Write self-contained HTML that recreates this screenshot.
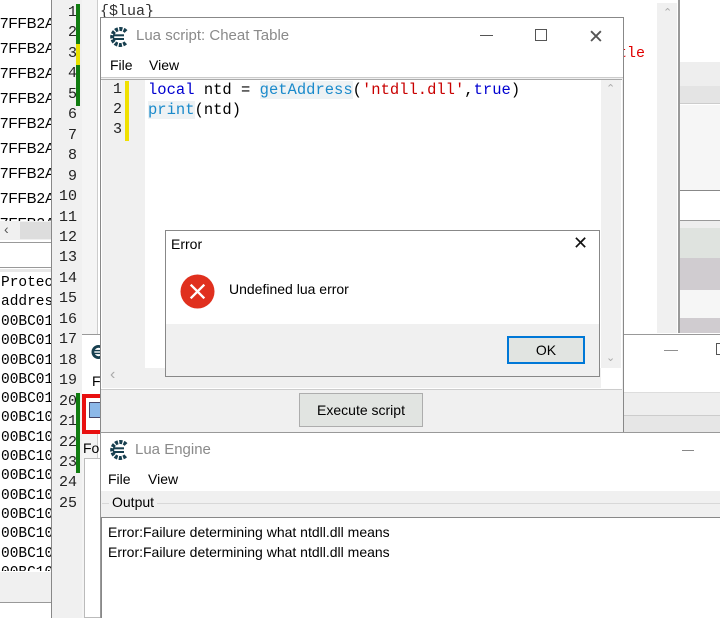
<!DOCTYPE html>
<html><head><meta charset="utf-8"><style>
*{margin:0;padding:0;box-sizing:border-box}
body{width:720px;height:618px;overflow:hidden;position:relative;background:#fff;font-family:"Liberation Sans","Noto Sans CJK SC",sans-serif;font-size:14px;color:#000}
.a{position:absolute}
.mono{font-family:"Liberation Mono",monospace;font-size:13.5px}
.ui{font-family:"Liberation Sans","Noto Sans CJK SC",sans-serif;font-size:14px}
</style></head><body>

<!-- left address list -->
<div class="a" style="left:0;top:0;width:52px;height:618px;background:#fff"></div>
<div class="a" style="left:0;top:11px;width:52px;line-height:25px;color:#000;overflow:hidden;height:210px;font-size:15px;white-space:nowrap">7FFB2A<br>7FFB2A<br>7FFB2A<br>7FFB2A<br>7FFB2A<br>7FFB2A<br>7FFB2A<br>7FFB2A<br>7FFB2A<br>7FFB2A</div>
<div class="a" style="left:0;top:221px;width:52px;height:19px;background:#f0f0f0"></div>
<div class="a" style="left:20px;top:222px;width:32px;height:17px;background:#ddd"></div>
<div class="a" style="left:4px;top:221px;color:#555;font-size:14px">&lsaquo;</div>
<div class="a" style="left:0;top:242px;width:52px;height:26px;background:#fff;border:1px solid #999;border-left:none"></div>
<div class="a" style="left:0;top:269px;width:52px;height:3px;background:#e8e8e8"></div>
<div class="a mono" style="left:1px;top:274px;line-height:19px;font-size:14.5px;white-space:nowrap;width:52px;overflow:hidden">Protec<br>address</div>
<div class="a mono" style="left:1px;top:313px;line-height:19.3px;height:258px;overflow:hidden;font-size:14.5px;width:51px;white-space:nowrap">00BC01<br>00BC01<br>00BC01<br>00BC01<br>00BC01<br>00BC10<br>00BC10<br>00BC10<br>00BC10<br>00BC10<br>00BC10<br>00BC10<br>00BC10<br>00BC10</div>
<div class="a" style="left:0;top:572px;width:52px;height:31px;background:#f0f0f0;border-bottom:1px solid #999"></div>

<!-- background editor gutter -->
<div class="a" style="left:51px;top:0;width:31px;height:618px;background:#f0f0f0;border-left:1px solid #888"></div>
<div class="a mono" style="left:53px;top:3px;line-height:20.45px;width:24px;text-align:right;color:#222;font-size:15px">1<br>2<br>3<br>4<br>5<br>6<br>7<br>8<br>9<br>10<br>11<br>12<br>13<br>14<br>15<br>16<br>17<br>18<br>19<br>20<br>21<br>22<br>23<br>24<br>25</div>
<div class="a" style="left:76px;top:4px;width:4px;height:40px;background:#107c10"></div>
<div class="a" style="left:76px;top:44px;width:4px;height:21px;background:#e8e000"></div>
<div class="a" style="left:76px;top:65px;width:4px;height:41px;background:#107c10"></div>
<div class="a" style="left:76px;top:393px;width:4px;height:80px;background:#107c10"></div>
<div class="a" style="left:82px;top:0;width:16px;height:618px;background:#f4f4f4;border-right:1px solid #ccc"></div>
<div class="a mono" style="left:100px;top:3px;color:#333;font-size:15px">{$lua}</div>
<div class="a mono" style="left:618px;top:45px;color:#e00000;font-size:15px">tle</div>
<div class="a" style="left:657px;top:3px;width:20px;height:330px;background:#f0f0f0"></div>
<div class="a" style="left:663px;top:6px;color:#aaa;font-size:11px">&#8963;</div>
<div class="a" style="left:678px;top:0;width:2px;height:333px;background:#999"></div>
<!-- right strip -->
<div class="a" style="left:680px;top:62px;width:40px;height:24px;background:#eee"></div>
<div class="a" style="left:680px;top:86px;width:40px;height:18px;background:#e4e4e4;border-bottom:1px solid #ccc"></div>
<div class="a" style="left:680px;top:105px;width:40px;height:85px;background:#f6f6f6"></div>
<div class="a" style="left:680px;top:190px;width:40px;height:1px;background:#888"></div>
<div class="a" style="left:680px;top:220px;width:40px;height:8px;background:#eee;border-top:1px solid #999"></div>
<div class="a" style="left:680px;top:228px;width:40px;height:30px;background:#dfe3df"></div>
<div class="a" style="left:680px;top:258px;width:40px;height:32px;background:#d0ccd0"></div>
<div class="a" style="left:680px;top:290px;width:40px;height:43px;background:#f6f6f6"></div>
<div class="a" style="left:680px;top:318px;width:40px;height:15px;background:#d0ccd0"></div>

<!-- window behind lua engine -->
<div class="a" style="left:82px;top:334px;width:638px;height:100px;background:#fff;border-top:1px solid #999"></div>
<div class="a" style="left:622px;top:392px;width:98px;height:42px;background:#eee;border-top:1px solid #ddd"></div>
<div class="a" style="left:622px;top:415px;width:98px;height:19px;background:#e6e6e6;border-top:1px solid #ccc"></div>
<div class="a" style="left:664px;top:341px;color:#888">&#8212;</div>
<div class="a" style="left:716px;top:343px;width:6px;height:12px;border:1px solid #555"></div>
<svg class="a" style="left:91px;top:343px" width="14" height="18" viewBox="0 0 20 20"><path d="M16 4A8 8 0 1 0 16 16" fill="none" stroke="#173f4f" stroke-width="4"/><rect x="5" y="7" width="10" height="2" fill="#173f4f"/><rect x="5" y="11" width="10" height="2" fill="#173f4f"/></svg>
<div class="a ui" style="left:92px;top:373px">Fi</div>
<div class="a" style="left:82px;top:394px;width:20px;height:40px;border:4px solid #e81010;border-right:none;background:#fff"></div>
<div class="a" style="left:89px;top:402px;width:12px;height:16px;background:#8cb8e8;border:1px solid #446"></div>
<div class="a ui" style="left:83px;top:440px">Fo</div>
<div class="a" style="left:84px;top:458px;width:17px;height:160px;background:#fff;border:1px solid #bbb"></div>

<!-- Lua script window -->
<div class="a" style="left:100px;top:17px;width:524px;height:416px;background:#f0f0f0;border:1px solid #888"></div>
<div class="a" style="left:101px;top:18px;width:522px;height:60px;background:#fff;border-bottom:1px solid #ccc"></div>
<svg class="a" style="left:110px;top:27px" width="20" height="20" viewBox="0 0 20 20"><path d="M16 4.5A8 8 0 1 0 16 15.5" fill="none" stroke="#173f4f" stroke-width="4" stroke-dasharray="3 1.3"/><rect x="3" y="7.3" width="11" height="2" fill="#173f4f"/><rect x="3" y="11" width="11" height="2" fill="#173f4f"/></svg>
<div class="a ui" style="left:136px;top:27px;font-size:15px;color:#8a8a8a">Lua script: Cheat Table</div>
<div class="a" style="left:480px;top:35px;width:13px;height:1px;background:#555"></div>
<div class="a" style="left:535px;top:29px;width:12px;height:12px;border:1px solid #555"></div>
<div class="a" style="left:588px;top:26px;font-size:19px;color:#555;font-weight:300">&#x2715;</div>
<div class="a ui" style="left:110px;top:57px">File</div>
<div class="a ui" style="left:149px;top:57px">View</div>
<div class="a" style="left:101px;top:79px;width:521px;height:310px;background:#fff;border-top:1px solid #aaa"></div>
<div class="a" style="left:102px;top:80px;width:43px;height:288px;background:#f0f0f0"></div>
<div class="a mono" style="left:106px;top:80px;line-height:20px;width:16px;text-align:right;color:#222;font-size:15px">1<br>2<br>3</div>
<div class="a" style="left:125px;top:81px;width:4px;height:60px;background:#f0e000"></div>
<div class="a mono" style="left:148px;top:80px;line-height:20px;white-space:pre;font-size:15.5px"><span style="color:#0000d0">local</span> ntd = <span style="color:#1a8acb;background:#eef2f4">getAddress</span>(<span style="color:#c80000">'ntdll.dll'</span>,<span style="color:#0000d0">true</span>)
<span style="color:#1a8acb;background:#eef2f4">print</span>(ntd)</div>
<div class="a" style="left:601px;top:80px;width:20px;height:288px;background:#f0f0f0"></div>
<div class="a" style="left:606px;top:82px;color:#aaa;font-size:11px">&#8963;</div>
<div class="a" style="left:606px;top:351px;color:#aaa;font-size:11px">&#8964;</div>
<div class="a" style="left:102px;top:368px;width:499px;height:20px;background:#f0f0f0"></div>
<div class="a" style="left:110px;top:366px;color:#aaa;font-size:16px">&lsaquo;</div>
<div class="a" style="left:101px;top:389px;width:521px;height:1px;background:#ccc"></div>
<div class="a ui" style="left:299px;top:393px;width:124px;height:34px;background:#e1e4e1;border:1px solid #adadad;text-align:center;line-height:32px">Execute script</div>

<!-- Error dialog -->
<div class="a" style="left:165px;top:230px;width:435px;height:147px;background:#fff;border:1px solid #888"></div>
<div class="a ui" style="left:171px;top:236px">Error</div>
<div class="a" style="left:573px;top:233px;font-size:18px;color:#111">&#x2715;</div>
<svg class="a" style="left:180px;top:274px" width="35" height="35" viewBox="0 0 36 36"><circle cx="18" cy="18" r="17.5" fill="#e0301e"/><path d="M11 11L25 25M25 11L11 25" stroke="#fff" stroke-width="2.4"/></svg>
<div class="a ui" style="left:229px;top:281px">Undefined lua error</div>
<div class="a" style="left:166px;top:324px;width:433px;height:52px;background:#f0f0f0"></div>
<div class="a ui" style="left:507px;top:336px;width:78px;height:28px;background:#e1e4e1;border:2px solid #0078d7;text-align:center;line-height:24px">OK</div>

<!-- Lua Engine -->
<div class="a" style="left:100px;top:432px;width:620px;height:186px;background:#f0f0f0;border-left:1px solid #999;border-top:1px solid #999"></div>
<div class="a" style="left:101px;top:433px;width:619px;height:58px;background:#fff"></div>
<svg class="a" style="left:110px;top:440px" width="20" height="20" viewBox="0 0 20 20"><path d="M16 4.5A8 8 0 1 0 16 15.5" fill="none" stroke="#173f4f" stroke-width="4" stroke-dasharray="3 1.3"/><rect x="3" y="7.3" width="11" height="2" fill="#173f4f"/><rect x="3" y="11" width="11" height="2" fill="#173f4f"/></svg>
<div class="a ui" style="left:135px;top:441px;font-size:15px;color:#8a8a8a">Lua Engine</div>
<div class="a" style="left:682px;top:450px;width:12px;height:1px;background:#888"></div>
<div class="a ui" style="left:108px;top:471px">File</div>
<div class="a ui" style="left:148px;top:471px">View</div>
<div class="a" style="left:102px;top:503px;width:618px;height:1px;background:#d8d8d8"></div>
<div class="a ui" style="left:109px;top:494px;background:#f0f0f0;padding:0 3px">Output</div>
<div class="a" style="left:101px;top:517px;width:619px;height:101px;background:#fff;border-top:1px solid #888;border-left:1px solid #888"></div>
<div class="a ui" style="left:108px;top:522px;line-height:20px">Error:Failure determining what ntdll.dll means<br>Error:Failure determining what ntdll.dll means</div>
</body></html>
